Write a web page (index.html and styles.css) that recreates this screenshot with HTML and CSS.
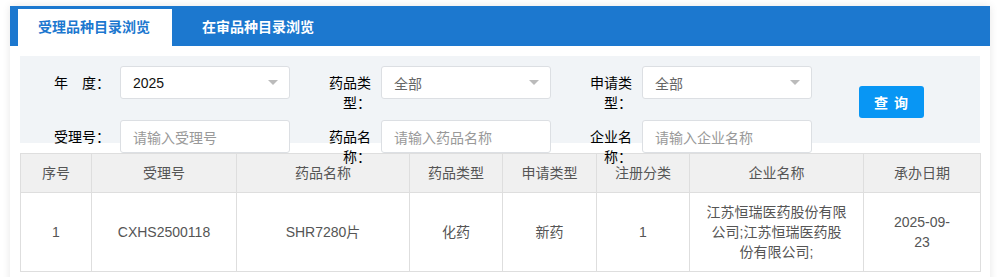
FILE: index.html
```html
<!DOCTYPE html>
<html lang="zh-CN">
<head>
    <meta charset="UTF-8">
    <meta name="viewport" content="width=device-width, initial-scale=1.0">
    <title>品种目录浏览</title>
    <link rel="stylesheet" href="styles.css">
</head>
<body>

    <div class="card">
        <div class="tabs">
            <div class="tab active">受理品种目录浏览</div>
            <div class="tab">在审品种目录浏览</div>
        </div>

        <div class="card-body">
            <div class="filter">
                <div class="fields">
                    <div class="field first">
                        <label>年　度：</label>
                        <div class="box select"><span class="value">2025</span><i class="arrow"></i></div>
                    </div>
                    <div class="field">
                        <label>药品类型：</label>
                        <div class="box select"><span class="muted">全部</span><i class="arrow"></i></div>
                    </div>
                    <div class="field">
                        <label>申请类型：</label>
                        <div class="box select"><span class="muted">全部</span><i class="arrow"></i></div>
                    </div>
                    <div class="field first">
                        <label>受理号：</label>
                        <div class="box"><span class="placeholder">请输入受理号</span></div>
                    </div>
                    <div class="field">
                        <label>药品名称：</label>
                        <div class="box"><span class="placeholder">请输入药品名称</span></div>
                    </div>
                    <div class="field">
                        <label>企业名称：</label>
                        <div class="box"><span class="placeholder">请输入企业名称</span></div>
                    </div>
                </div>
                <button class="search-btn">查 询</button>
            </div>

            <table class="result">
                <colgroup>
                    <col style="width: 71px">
                    <col style="width: 145px">
                    <col style="width: 173px">
                    <col style="width: 93px">
                    <col style="width: 94px">
                    <col style="width: 93px">
                    <col style="width: 174px">
                    <col style="width: 117px">
                </colgroup>
                <thead>
                    <tr>
                        <th>序号</th>
                        <th>受理号</th>
                        <th>药品名称</th>
                        <th>药品类型</th>
                        <th>申请类型</th>
                        <th>注册分类</th>
                        <th>企业名称</th>
                        <th>承办日期</th>
                    </tr>
                </thead>
                <tbody>
                    <tr>
                        <td>1</td>
                        <td>CXHS2500118</td>
                        <td>SHR7280片</td>
                        <td>化药</td>
                        <td>新药</td>
                        <td>1</td>
                        <td class="company">江苏恒瑞医药股份有限公司;江苏恒瑞医药股份有限公司;</td>
                        <td class="date">2025-09-23</td>
                    </tr>
                </tbody>
            </table>
        </div>
    </div>

</body>
</html>
```

FILE: styles.css
```css
body {
    margin: 0;
    padding: 0;
    background: #fff;
    font-family: "Liberation Sans", "Noto Sans CJK SC", sans-serif;
    font-size: 14px;
    color: #222;
}

.card {
    width: 980px;
    margin: 6px 0 0 10px;
    background: #fff;
    box-shadow: 0 0 8px rgba(0, 0, 0, 0.1);
    min-height: 300px;
}

/* tab bar */
.tabs {
    display: flex;
    align-items: flex-end;
    height: 40px;
    padding-left: 8px;
    background: #1c78cf;
}

.tab {
    height: 37px;
    line-height: 37px;
    padding: 0 20px;
    margin-right: 10px;
    color: #fff;
    font-weight: bold;
    font-size: 14px;
}

.tab.active {
    width: 114px;
    background: #fff;
    color: #1c78cf;
}

.card-body {
    padding: 10px;
}

/* filter panel */
.filter {
    display: flex;
    align-items: flex-start;
    box-sizing: border-box;
    height: 87px;
    padding: 10px 0 0 20px;
    background: #f1f4f7;
}

.fields {
    display: grid;
    grid-template-columns: 250px 230px 230px;
    grid-auto-rows: 33px;
    column-gap: 31px;
    row-gap: 21px;
}

.field {
    display: flex;
    align-items: flex-start;
    height: 33px;
}

.field label {
    width: 50px;
    margin-right: 10px;
    padding-top: 7px;
    line-height: 20px;
    text-align: right;
    color: #000;
}

.field.first label {
    width: 70px;
}

.box {
    display: flex;
    align-items: center;
    justify-content: space-between;
    flex-shrink: 0;
    box-sizing: border-box;
    width: 170px;
    height: 33px;
    padding: 0 11px 0 12px;
    background: #fff;
    border: 1px solid #dcdfe3;
    border-radius: 3px;
}

.value {
    color: #111;
}

.muted {
    color: #666;
}

.placeholder {
    color: #999;
}

.arrow {
    width: 0;
    height: 0;
    border-left: 5px solid transparent;
    border-right: 5px solid transparent;
    border-top: 5px solid #bbb;
}

.search-btn {
    width: 65px;
    height: 32px;
    margin: 20px 0 0 47px;
    padding: 0;
    background: #0896f4;
    border: none;
    border-radius: 3px;
    color: #fff;
    font-family: inherit;
    font-size: 14px;
    font-weight: bold;
    letter-spacing: 1px;
    cursor: pointer;
}

/* result table */
.result {
    width: 960px;
    margin-top: 10px;
    table-layout: fixed;
    border-collapse: collapse;
    color: #555;
}

.result th,
.result td {
    border: 1px solid #dedede;
    padding: 9px 10px;
    line-height: 20px;
    text-align: center;
    font-weight: normal;
}

.result th {
    background: #f0f0f0;
}

.result td.company {
    padding: 9px 16px;
}

.result td.date {
    padding: 9px 28px;
    word-break: break-all;
}
```
